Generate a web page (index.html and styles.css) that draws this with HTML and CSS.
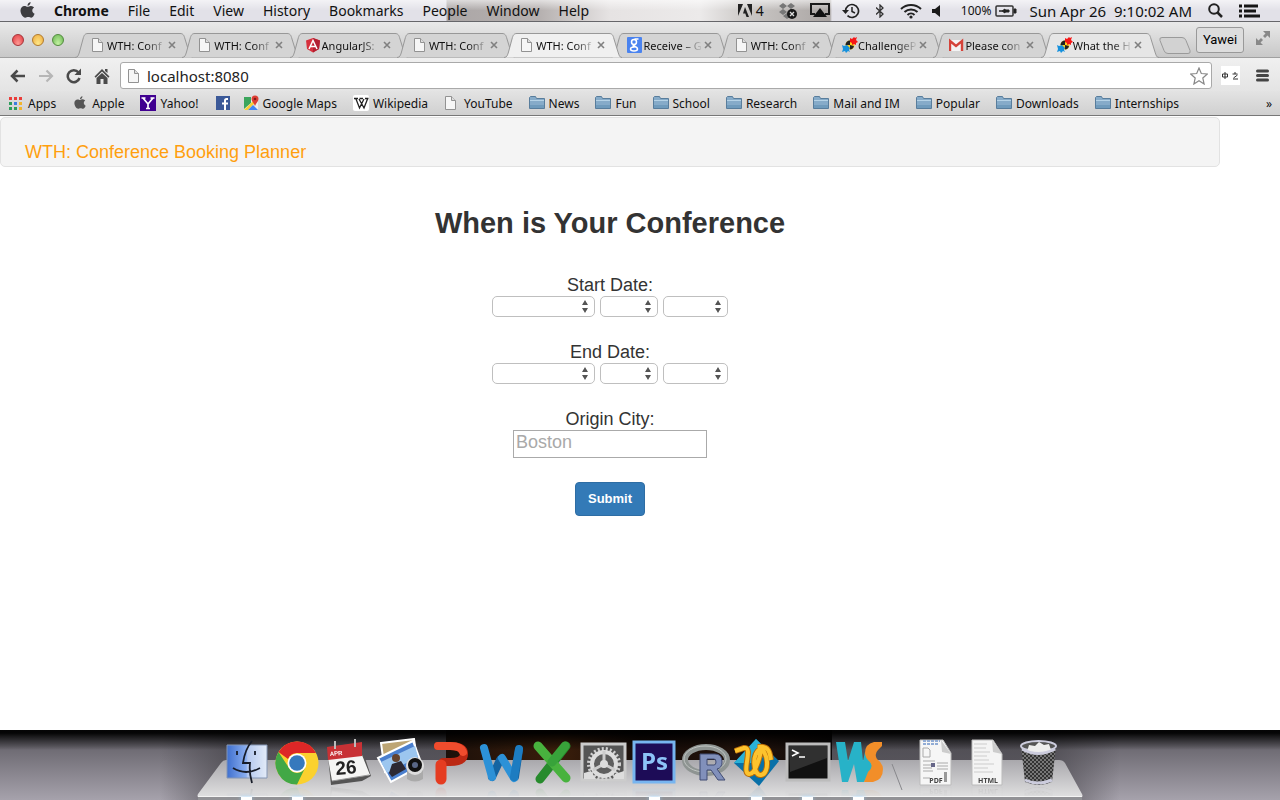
FILE: index.html
```html
<!DOCTYPE html>
<html lang="en">
<head>
    <meta charset="utf-8">
    <title>WTH: Conference Booking Planner</title>
    <link rel="stylesheet" href="styles.css">
</head>
<body>
    <!-- Shared icons -->
    <svg class="sprite" aria-hidden="true">
        <symbol id="doc" viewBox="0 0 16 16">
            <path d="M1.500 1.500h6l4 4v9h-10z" fill="#f6f6f6" stroke="#929292"/>
            <path d="M7.500 1.500v4h4" fill="#ddd" stroke="#929292"/>
        </symbol>
        <symbol id="folder" viewBox="0 0 16 16">
            <path d="M.5 13.500v-11l1-1h5l1 2h8v10z" fill="#86abc9" stroke="#587d9c"/>
            <path d="M1 5.500h14" stroke="#b5d2e6"/>
            <path d="M1 10h14v3H1z" fill="#709bbc"/>
        </symbol>
        <symbol id="apple" viewBox="0 0 16 18">
            <path d="M11.300 0c.2 2-1.400 3.900-3.300 4C7.800 2.100 9.500.300 11.300 0zM8.200 5c.8 0 1.900-1 3.600-.9 1.300.1 2.500.7 3.200 1.700-2.900 1.800-2.300 5.600.6 6.700-.7 1.900-2 4.200-3.600 4.200-1.200 0-1.700-.7-3.200-.7s-2 .7-3.200.7C3.300 16.700.5 12.900.5 9.100.5 6 2.600 4.200 4.700 4.200 6.200 4.200 7.300 5 8.200 5z"/>
        </symbol>
        <symbol id="close" viewBox="0 0 8 8">
            <path d="M1 1l6 6M7 1L1 7" stroke="#808080" stroke-width="1.600"/>
        </symbol>
        <symbol id="tab-shape" viewBox="0 0 118 25">
            <path d="M0 24.500C3 24.500 3.500 22 4.500 19L8 6C9 2 10 .5 13 .5h92c3 0 4 1.500 5 5.500l4 13c1 3 1.500 5.500 4 5.500"/>
        </symbol>
        <symbol id="puzzle" viewBox="0 0 16 16">
            <circle cx="8" cy="8" r="4.500" fill="#fdd01c"/>
            <path d="M8 8V3.500A4.500 4.500 0 0 0 3.500 8zM8 8v4.500A4.500 4.500 0 0 0 12 9z" fill="#222"/>
            <path d="M8 1l2 1 2-2 1 1 2-1-1 3 2 2-2 1v2l-2-1-2 1V6L8 5z" fill="#f51616"/>
            <path d="M0 8l2 1 3-1 3 3-1 2 1 2-2-1-2 2-1-2-3 1 1-3z" fill="#1691dd"/>
        </symbol>
    </svg>

    <header class="menubar">
        <nav class="menus">
            <svg class="apple-logo"><use href="#apple"/></svg>
            <strong>Chrome</strong>
            <span>File</span>
            <span>Edit</span>
            <span>View</span>
            <span>History</span>
            <span>Bookmarks</span>
            <span>People</span>
            <span>Window</span>
            <span>Help</span>
        </nav>
        <div class="status">
            <svg width="14" height="13" viewBox="0 0 14 13"><path d="M0 0h5L0 12zM9 0h5v12zM7 3l4 10H8.500L7.300 9.500H5z" fill="#222"/></svg>
            <span class="adobe-count">4</span>
            <svg class="dropbox" width="20" height="16" viewBox="0 0 20 16"><path d="M5 0l4 3-4 3-4-3zM13 0l4 3-4 3-4-3zM5 6l4 3-4 3-4-3zM13 6l4 3-4 3-4-3zM9 10l4 3-4 3-4-3z" fill="#777"/><circle cx="14" cy="11" r="5" fill="#181818"/><path d="M12 9l4 4M16 9l-4 4" stroke="#ddd" stroke-width="1.300"/></svg>
            <svg width="20" height="15" viewBox="0 0 20 15"><path d="M5 11H1V1h18v10h-4" fill="none" stroke="#1a1a1a" stroke-width="2"/><path d="M10 5l7 9H3z" fill="#111"/></svg>
            <svg width="18" height="16" viewBox="0 0 18 16"><path d="M3.500 8a6.500 6.500 0 1 1 2 4.700" fill="none" stroke="#222" stroke-width="1.700"/><path d="M0 7h7l-3.500 4z" fill="#222"/><path d="M10 4v4.500l3 1.500" fill="none" stroke="#222" stroke-width="1.500"/></svg>
            <svg class="bluetooth" width="8" height="14" viewBox="0 0 8 14"><path d="M0 3.500l7 6.500-3 3V1l3 3-7 6.500" fill="none" stroke="#333" stroke-width="1.300"/></svg>
            <svg width="22" height="16" viewBox="0 0 22 16"><g fill="none" stroke="#222" stroke-width="2"><path d="M1 6a14.500 14.500 0 0 1 20 0M4.500 9a9.500 9.500 0 0 1 13 0M7.500 12a5 5 0 0 1 7 0"/></g><circle cx="11" cy="14" r="1.600" fill="#222"/></svg>
            <svg class="volume" width="9" height="12" viewBox="0 0 9 12"><path d="M0 4h3l5-4v12L3 8H0z" fill="#1a1a1a"/></svg>
            <span class="percent">100%</span>
            <svg class="battery" width="22" height="12" viewBox="0 0 22 12"><rect x="1" y="1" width="17" height="10" rx="1" fill="none" stroke="#333" stroke-width="1.500"/><path d="M19 4h2v4h-2zM4 6h3l3-2v1h4v2h-4v1L7 6z" fill="#222" stroke="#222"/></svg>
            <time>Sun Apr 26&nbsp; 9:10:02 AM</time>
            <svg class="search" width="15" height="15" viewBox="0 0 15 15"><circle cx="6" cy="6" r="4.800" fill="none" stroke="#222" stroke-width="2"/><path d="M9.500 9.500L14 14" stroke="#222" stroke-width="2.500"/></svg>
            <svg width="21" height="14" viewBox="0 0 21 14"><path d="M0 2h3M0 7h3M0 12h3M5 2h14M5 7h12M5 12h16" stroke="#161616" stroke-width="2.800"/></svg>
        </div>
    </header>

    <div class="browser">
        <div class="tabstrip">
            <div class="lights"><i class="red"></i><i class="yellow"></i><i class="green"></i></div>
            <div class="tabs">
                <div class="tab"><svg class="shape"><use href="#tab-shape"/></svg><svg class="icon"><use href="#doc"/></svg><span>WTH: Conf</span><button aria-label="Close tab"><svg><use href="#close"/></svg></button></div>
                <div class="tab"><svg class="shape"><use href="#tab-shape"/></svg><svg class="icon"><use href="#doc"/></svg><span>WTH: Conf</span><button aria-label="Close tab"><svg><use href="#close"/></svg></button></div>
                <div class="tab"><svg class="shape"><use href="#tab-shape"/></svg><svg class="icon" viewBox="0 0 16 16"><path d="M7 1l7 2.500-1 8.500-6 3.500L1 12 0 3.500z" fill="#d7303d"/><path d="M7 1l7 2.500-1 8.500-6 3.500z" fill="#b31f31"/><path d="M3 12l4-8.500 4 8.500M4.500 9.500h5" fill="none" stroke="#fff" stroke-width="1.500"/></svg><span>AngularJS:</span><button aria-label="Close tab"><svg><use href="#close"/></svg></button></div>
                <div class="tab"><svg class="shape"><use href="#tab-shape"/></svg><svg class="icon"><use href="#doc"/></svg><span>WTH: Conf</span><button aria-label="Close tab"><svg><use href="#close"/></svg></button></div>
                <div class="tab active"><svg class="shape"><use href="#tab-shape"/></svg><svg class="icon"><use href="#doc"/></svg><span>WTH: Conf</span><button aria-label="Close tab"><svg><use href="#close"/></svg></button></div>
                <div class="tab"><svg class="shape"><use href="#tab-shape"/></svg><svg class="icon" viewBox="0 0 16 16"><rect width="15" height="16" rx="1" fill="#4a83ef"/><g fill="none" stroke="#fff" stroke-width="1.500"><circle cx="7" cy="5" r="2.500"/><path d="M11.500 2h-4M8.500 7.500c-3 1-3 1.500-1 2s3 1 3 2.500-1.500 2-3.500 2-3.500-.5-3.500-2 1.500-2 4-2"/></g></svg><span>Receive – G</span><button aria-label="Close tab"><svg><use href="#close"/></svg></button></div>
                <div class="tab"><svg class="shape"><use href="#tab-shape"/></svg><svg class="icon"><use href="#doc"/></svg><span>WTH: Conf</span><button aria-label="Close tab"><svg><use href="#close"/></svg></button></div>
                <div class="tab"><svg class="shape"><use href="#tab-shape"/></svg><svg class="icon"><use href="#puzzle"/></svg><span>ChallengeP</span><button aria-label="Close tab"><svg><use href="#close"/></svg></button></div>
                <div class="tab"><svg class="shape"><use href="#tab-shape"/></svg><svg class="icon" viewBox="0 0 16 16"><path d="M0 3h14v11H0z" fill="#f4f4f4"/><path d="M1 14V4l6 5 6-5v10" fill="none" stroke="#d5433a" stroke-width="2.400"/></svg><span>Please con</span><button aria-label="Close tab"><svg><use href="#close"/></svg></button></div>
                <div class="tab light"><svg class="shape"><use href="#tab-shape"/></svg><svg class="icon"><use href="#puzzle"/></svg><span>What the H</span><button aria-label="Close tab"><svg><use href="#close"/></svg></button></div>
            </div>
            <button class="new-tab" aria-label="New tab"><svg width="32" height="17" viewBox="0 0 32 17"><path d="M3 .5h20q3 0 4 3l4 10q1 3-2 3H9q-3 0-4-3l-4-10Q0 .5 3 .5z" fill="#d2d2d2" stroke="#9a9a9a"/></svg></button>
            <button class="profile">Yawei</button>
            <svg class="fullscreen" width="14" height="14" viewBox="0 0 14 14"><path d="M7 0h7v7l-2.500-2.500L9 7 7 5l2.500-2.500zM0 7l2.500 2.500L5 7l2 2-2.500 2.500L7 14H0z" fill="#888"/></svg>
        </div>

        <div class="toolbar">
            <button aria-label="Back"><svg width="16" height="14" viewBox="0 0 16 14"><path d="M15 7H2M7.500 1.500L2 7l5.500 5.500" fill="none" stroke="#4a4a4a" stroke-width="2.500"/></svg></button>
            <button aria-label="Forward"><svg width="16" height="14" viewBox="0 0 16 14"><path d="M1 7h13M8.500 1.500L14 7l-5.500 5.500" fill="none" stroke="#b6b6b6" stroke-width="2.200"/></svg></button>
            <button aria-label="Reload"><svg width="16" height="16" viewBox="0 0 16 16"><path d="M12.500 4.500A6 6 0 1 0 13.500 10" fill="none" stroke="#4a4a4a" stroke-width="2.500"/><path d="M15 .5V7H8.500z" fill="#4a4a4a"/></svg></button>
            <button aria-label="Home"><svg width="16" height="16" viewBox="0 0 16 16"><path d="M8 1l7.500 7.500-1.200 1.200L8 3.500 1.700 9.700.5 8.500zM11 1h2.500v4L11 3zM8 5l5.500 5v6h-4v-5h-3v5h-4v-6z" fill="#4a4a4a"/></svg></button>
            <div class="omnibox">
                <svg class="icon"><use href="#doc"/></svg>
                <input type="text" aria-label="Address" value="localhost:8080">
                <svg width="18" height="18" viewBox="0 0 18 18"><path d="M9 1l2.300 5.500 6 .5-4.500 4 1.300 6L9 13.800 3.900 17l1.300-6L.7 7l6-.5z" fill="#fff" stroke="#888" stroke-width="1.200"/></svg>
            </div>
            <svg class="extension" width="19" height="19" viewBox="0 0 19 19"><path d="M0 0h19v19H0z" fill="#fff"/><path d="M1.500 8h5v3h-5zM4 6v7M14 6v2M11.500 8h5M12.500 12l4-3M12 13h5" fill="none" stroke="#333"/></svg>
            <button class="menu-button" aria-label="Menu"><svg width="13" height="13" viewBox="0 0 13 13"><path d="M1.500 2h10M1.500 6.500h10M1.500 11h10" stroke="#444" stroke-width="3" stroke-linecap="round"/></svg></button>
        </div>

        <nav class="bookmarks">
            <a href="#"><svg class="icon" viewBox="0 0 16 16"><path d="M1 2h3v3H1zM6 2h3v3H6zM11 2h3v3h-3z" fill="#ea3d3a"/><path d="M1 7h3v3H1zM1 12h3v3H1zM6 12h3v3H6z" fill="#2d9c5a"/><path d="M6 7h3v3H6z" fill="#3c7de0"/><path d="M11 7h3v3h-3zM11 12h3v3h-3z" fill="#f2b52c"/></svg>Apps</a>
            <a href="#"><svg class="icon gray"><use href="#apple" x="2" y="1" width="12" height="14"/></svg>Apple</a>
            <a href="#"><svg class="icon" viewBox="0 0 16 16"><path d="M0 0h16v16H0z" fill="#400090"/><path d="M3 3l5 6v5M13 3L8 9M1.500 3h4M10.500 3h4M6 13.500h4" fill="none" stroke="#fff" stroke-width="1.700"/></svg>Yahoo!</a>
            <a href="#" aria-label="Facebook" class="facebook"><svg class="icon" viewBox="0 0 16 16"><path d="M1 1h14v14H1z" fill="#3b5998"/><path d="M13 4h-1.500Q10 4 10 5.500V15M7 8.500h6" fill="none" stroke="#fff" stroke-width="2"/></svg></a>
            <a href="#"><svg class="icon" viewBox="0 0 16 16"><path d="M1 2h14v13H1z" fill="#eee"/><path d="M1 2h7v6l-7 6z" fill="#3ba55c"/><path d="M1 15L10 6l2 2-7 7z" fill="#f9cf38"/><path d="M5 15l5-5 5 5z" fill="#4285f4"/><path d="M12 11C11 8 8.500 6.500 8.500 4a3.500 3.500 0 0 1 7 0c0 2.500-2.500 4-3.500 7z" fill="#dd3f34"/><circle cx="12" cy="4" r="1.300" fill="#801b19"/></svg>Google Maps</a>
            <a href="#"><svg class="icon" viewBox="0 0 16 16"><rect width="16" height="16" rx="2" fill="#fff"/><path d="M1 3.500h4M6.500 3.500h3.500M12 3.500h3.500M3 4l3.500 9L11 4M6 4l5 9 3.500-9" fill="none" stroke="#222" stroke-width="1.300"/></svg>Wikipedia</a>
            <a href="#"><svg class="icon"><use href="#doc"/></svg>YouTube</a>
            <a href="#"><svg class="icon"><use href="#folder"/></svg>News</a>
            <a href="#"><svg class="icon"><use href="#folder"/></svg>Fun</a>
            <a href="#"><svg class="icon"><use href="#folder"/></svg>School</a>
            <a href="#"><svg class="icon"><use href="#folder"/></svg>Research</a>
            <a href="#"><svg class="icon"><use href="#folder"/></svg>Mail and IM</a>
            <a href="#"><svg class="icon"><use href="#folder"/></svg>Popular</a>
            <a href="#"><svg class="icon"><use href="#folder"/></svg>Downloads</a>
            <a href="#"><svg class="icon"><use href="#folder"/></svg>Internships</a>
            <span class="more">»</span>
        </nav>

        <main class="page">
            <div class="navbar"><a href="#">WTH: Conference Booking Planner</a></div>
            <form class="planner">
                <h2>When is Your Conference</h2>
                <label for="start-month">Start Date:</label>
                <div class="date">
                    <select id="start-month" class="month"><option></option></select>
                    <select class="day" aria-label="Start day"><option></option></select>
                    <select class="year" aria-label="Start year"><option></option></select>
                </div>
                <label for="end-month">End Date:</label>
                <div class="date">
                    <select id="end-month" class="month"><option></option></select>
                    <select class="day" aria-label="End day"><option></option></select>
                    <select class="year" aria-label="End year"><option></option></select>
                </div>
                <label for="city">Origin City:</label>
                <input type="text" id="city" placeholder="Boston">
                <button type="button" class="btn">Submit</button>
            </form>
        </main>
    </div>

    <footer class="desktop">
        <svg class="shelf" viewBox="0 0 886 40" preserveAspectRatio="none">
            <defs>
                <linearGradient id="shelf-fill" x2="0" y2="1"><stop offset="0" stop-color="#a9a8ac"/><stop offset="1" stop-color="#e0e0e1"/></linearGradient>
            </defs>
            <path d="M29 0h833q4 0 6 3l17 31q1 2 0 3H1q-1-1 0-3L24 3q2-3 5-3z" fill="url(#shelf-fill)"/>
            <path d="M1 36h884v4H1z" fill="#929296"/>
            <path d="M1 36.500h884" stroke="#f4f4f4"/>
        </svg>
        <div class="dock">
            <!-- Finder -->
            <div class="app running"><svg viewBox="0 0 51 60">
                <defs><linearGradient id="finder" x2="1"><stop offset="0" stop-color="#3f70cf"/><stop offset=".48" stop-color="#8aaef0"/><stop offset=".52" stop-color="#b5c9ef"/><stop offset="1" stop-color="#e3ebf8"/></linearGradient></defs>
                <path d="M6 7h40v33H6z" fill="url(#finder)" stroke="#8496b5"/>
                <path d="M31 3C25 10 23 18 22 25h7c-1 8 0 13 2 20M12 30c8 5 18 5 27 0M16 13v4M34 13v4" fill="none" stroke="#171c28" stroke-width="1.800"/>
            </svg></div>
            <!-- Chrome -->
            <div class="app running"><svg viewBox="0 0 51 60">
                <circle cx="25" cy="25" r="21.500" fill="#fbd12e"/>
                <path d="M6.500 14A21.500 21.500 0 0 1 44 15H25a10 10 0 0 0-9 6z" fill="#dd2727"/>
                <path d="M6.500 14A21.500 21.500 0 0 0 25 46.500L33 30a9 9 0 0 1-16 0z" fill="#42a846"/>
                <circle cx="25" cy="25" r="9.500" fill="#fff"/><circle cx="25" cy="25" r="7.800" fill="#3679bd"/>
            </svg></div>
            <!-- Calendar -->
            <div class="app"><svg viewBox="0 0 51 60">
                <path d="M4 9l33-4 11 33-9 5-31 4z" fill="#555"/>
                <path d="M5 20l34-3 8 20-38 6z" fill="#f5f5f4"/>
                <path d="M4 9l35-5v14L5 22z" fill="#c83135"/>
                <path d="M12 3v8M32 1v8" stroke="#bbb" stroke-width="2"/>
                <text x="7" y="18" class="cal-month" transform="rotate(-5 7 18)">APR</text>
                <text x="13" y="37" class="cal-day" transform="rotate(-5 13 37)">26</text>
                <path d="M9 43l37-6" stroke="#999"/>
            </svg></div>
            <!-- Preview -->
            <div class="app"><svg viewBox="0 0 51 60">
                <path d="M7 5l33-4 4 28-33 5z" fill="#bda574" stroke="#fff" stroke-width="2"/>
                <path d="M4 20L39 3l9 24-31 17z" fill="#4b7fce" stroke="#fff" stroke-width="2"/>
                <path d="M7 24l34-16 3 11-31 16z" fill="#9cc6ef"/>
                <circle cx="22" cy="20" r="4" fill="#65432f"/><path d="M15 35l3-9 9-3 5 8-14 8z" fill="#2c2833"/>
                <path d="M33 32h16v9q-8 5-16 0z" fill="#aaa"/><circle cx="41" cy="28" r="9" fill="#ddd"/><circle cx="41" cy="27" r="7" fill="#111"/><circle cx="41" cy="27" r="3" fill="#596786"/>
            </svg></div>
            <!-- PowerPoint -->
            <div class="app"><svg viewBox="0 0 51 60">
                <path d="M13 8h12q14 0 14 8t-14 8h-7" fill="none" stroke="#bb2814" stroke-width="8" stroke-linecap="round"/>
                <path d="M13 8h12q11 0 13 6" fill="none" stroke="#ef4c2d" stroke-width="8" stroke-linecap="round"/>
                <path d="M16 27v14" stroke="#e53c21" stroke-width="11" stroke-linecap="round"/>
            </svg></div>
            <!-- Word -->
            <div class="app"><svg viewBox="0 0 51 60" fill="none" stroke-linecap="round" stroke-width="8">
                <path d="M24 22L16 39M43 12l-4 27" stroke="#1464a2"/>
                <path d="M8 10l8 29M26 20l12 20" stroke="#2c91d7"/><path d="M43 11l-5 28" stroke="#1d7cc1"/>
            </svg></div>
            <!-- Excel -->
            <div class="app"><svg viewBox="0 0 51 60" fill="none" stroke-linecap="round" stroke-width="9">
                <path d="M39 8L13 41" stroke="#278b2d"/><path d="M11 8l28 32" stroke="#48b23e"/>
                <path d="M38 8L25 24" stroke="#38a33a"/>
            </svg></div>
            <!-- System Preferences -->
            <div class="app"><svg viewBox="0 0 51 60">
                <path d="M4 6h43v36H4z" fill="#555" stroke="#ccc" stroke-width="3"/>
                <circle cx="26" cy="26" r="15" fill="none" stroke="#d0d0d0" stroke-width="4" stroke-dasharray="2 2"/>
                <circle cx="26" cy="26" r="12" fill="#5e5e5e" stroke="#ddd" stroke-width="4"/>
                <path d="M26 26V13M26 26l-11 6M26 26l11 6" stroke="#ccc" stroke-width="3"/><circle cx="26" cy="26" r="4" fill="#ddd"/>
                <path d="M6 35l7-2 5 8H6zM46 33l-9 3-2 5h11z" fill="#ddd"/>
            </svg></div>
            <!-- Photoshop -->
            <div class="app running"><svg viewBox="0 0 51 60">
                <path d="M5 4h40v40H5z" fill="#1d0c57" stroke="#77b5f0" stroke-width="3"/>
                <text x="12" y="32" class="ps">Ps</text>
            </svg></div>
            <!-- R -->
            <div class="app"><svg viewBox="0 0 51 60">
                <ellipse cx="26" cy="22" rx="21" ry="13" fill="none" stroke="#8e9492" stroke-width="6"/>
                <ellipse cx="25" cy="21" rx="21" ry="13" fill="none" stroke="#c0c5c2" stroke-width="1"/>
                <path d="M20 42V16h15q7 0 7 8 0 6-5 7l8 11h-7l-7-10h-4v10zM27 21v6h7q2 0 2-3t-2-3z" fill="#8190bb" stroke="#414c74"/>
            </svg></div>
            <!-- TextWrangler -->
            <div class="app running"><svg viewBox="0 0 51 60">
                <path d="M25 1l23 22-20 25L3 25z" fill="#0870a8"/><path d="M25 1l13 13-13 11L3 25z" fill="#29b1d7"/>
                <path d="M4 13l9-3c10-2-3 25 5 26 7 1 12-22 12-25-10 3-8 27 0 26 9-1 8-25-3-28 12-2 12 8 13 13" fill="none" stroke="#b86c08" stroke-width="6"/>
                <path d="M4 13l9-3c10-2-3 25 5 26 7 1 12-22 12-25-10 3-8 27 0 26 9-1 8-25-3-28 12-2 12 8 13 13" fill="none" stroke="#fdc32d" stroke-width="4"/>
            </svg></div>
            <!-- Terminal -->
            <div class="app running"><svg viewBox="0 0 51 60">
                <path d="M5 6h42v36H5z" fill="#111" stroke="#bcbcbc" stroke-width="3"/><path d="M7 8h38v12L8 34z" fill="#303030"/>
                <path d="M10 12l6 3-6 3M17 19h6" fill="none" stroke="#fff" stroke-width="1.600"/>
            </svg></div>
            <!-- WebStorm -->
            <div class="app running"><svg viewBox="0 0 51 60">
                <path d="M3 4h9l3 19 6-19h7l2 19 2-9 8 15-9 15h-7l-3-18-6 18H9z" fill="#27b2c8"/>
                <path d="M49 4h-8q-9 2-9 11 0 5 5 9 4 5-2 10l-4 10h9q10-2 10-13 0-5-6-10-3-5 1-9l4-4z" fill="#f28e29"/>
            </svg></div>
            <svg class="separator" viewBox="0 0 27 60"><path d="M8 26l10 26" stroke="#88888c"/></svg>
            <!-- Stacks -->
            <div class="app"><svg viewBox="0 0 51 60">
                <path d="M9 2h23l8 13v32H9z" fill="#f6f6f6" stroke="#bbb"/><path d="M30 2l10 14-9-2z" fill="#ccc"/>
                <path d="M12 3h17M12 6h15" stroke="#91acd5" stroke-width="2" stroke-dasharray="3 1"/>
                <path d="M12 10h5l2 2v7h-7zM12 23h12M12 27h10M12 30h9M12 33h10M26 25h11M26 28h11M26 31h11M12 40h7" fill="none" stroke="#aaa"/><path d="M20 25h4v4h-4z" fill="#668"/>
                <text x="25" y="45" class="file-type">PDF</text><path d="M33 34h3v10h-3z" fill="#999"/>
            </svg></div>
            <div class="app"><svg viewBox="0 0 51 60">
                <path d="M10 2h21l9 14v31H10z" fill="#f4f4f4" stroke="#bbb"/><path d="M30 2l10 14-9-2z" fill="#ccc"/>
                <path d="M12 6h13M12 10h12M12 14h16M12 18h13M12 22h15M12 26h20M12 30h14M12 34h19" stroke="#ccc"/>
                <text x="26" y="45" class="file-type">HTML</text>
            </svg></div>
            <!-- Trash -->
            <div class="app"><svg viewBox="0 0 51 60">
                <defs><pattern id="mesh" width="4" height="4" patternUnits="userSpaceOnUse"><path d="M0 0h4v4H0z" fill="#777"/><path d="M0 0l4 4M4 0L0 4" stroke="#333"/></pattern></defs>
                <path d="M8 8h35l-4 36q-13 6-27 0z" fill="url(#mesh)"/>
                <ellipse cx="25.500" cy="8" rx="17.500" ry="5" fill="#555" stroke="#ccd" stroke-width="2"/>
                <path d="M14 14l2-7 6 1 4-4 5 3 5-1 2 6-9 4z" fill="#eee"/>
                <path d="M9 11q16 9 33 0M12 42q13 6 27 0" fill="none" stroke="#ccd" stroke-width="3"/>
            </svg></div>
        </div>
    </footer>
</body>
</html>
```
FILE: styles.css
```css
* {
    box-sizing: border-box;
}

body {
    margin: 0;
    min-height: 100vh;
    display: flex;
    flex-direction: column;
    font-family: "Noto Sans", sans-serif;
    color: #111;
}

button {
    display: flex;
    padding: 0;
    border: 0;
    background: none;
    font: inherit;
}

svg {
    display: block;
    flex: none;
}

.sprite {
    position: absolute;
    width: 0;
    height: 0;
}

.icon {
    width: 16px;
    height: 16px;
}

/* Menu bar */
.menubar {
    display: flex;
    justify-content: space-between;
    height: 22px;
    padding: 0 20px;
    font-size: 14px;
    line-height: 22px;
    white-space: nowrap;
    border-bottom: 1px solid #66666a;
    background:
        linear-gradient(rgba(255, 255, 255, 0.6), rgba(255, 255, 255, 0) 50%),
        linear-gradient(90deg, #e2e1e8 446px, #aba6a6 447px, #b6b1b0 540px, #e6e3e3 610px, #eceaea 700px, #c9c6c4 750px, #aaa5a3 830px, #e2e1e8 832px);
}

.menus,
.status {
    display: flex;
    align-items: center;
    gap: 19px;
}

.apple-logo {
    width: 15px;
    height: 17px;
    fill: #3d3d40;
}

.status {
    gap: 12px;
}

.adobe-count {
    margin: 0 2px 0 -8px;
}

.bluetooth {
    margin: 0 4px;
}

.volume {
    margin: 0 8px 0 -2px;
}

.percent {
    font-size: 12px;
}

.battery {
    margin-left: -8px;
}

.status time {
    font-size: 15px;
}

.search {
    margin: 0 4px;
}

/* Browser window */
.browser {
    flex: 1;
    display: flex;
    flex-direction: column;
    background: #fff;
}

.tabstrip {
    display: flex;
    align-items: center;
    height: 36px;
    padding: 0 10px 0 12px;
    border-bottom: 1px solid #a0a0a0;
    background: linear-gradient(#e9e9e9, #c8c8c8);
}

.lights {
    display: flex;
    gap: 8px;
    width: 63px;
}

.lights i {
    width: 12px;
    height: 12px;
    border: 1px solid;
    border-radius: 50%;
}

.lights .red {
    border-color: #a5343a;
    background: radial-gradient(at 50% 90%, #ff9c96, #e2383f);
}

.lights .yellow {
    border-color: #b17a2c;
    background: radial-gradient(at 50% 90%, #ffe989, #eeaa3c);
}

.lights .green {
    border-color: #528b3e;
    background: radial-gradient(at 50% 90%, #c5f3a3, #69b652);
}

.tabs {
    flex: 1;
    display: flex;
    align-self: flex-end;
}

.tab {
    position: relative;
    flex: 1;
    display: flex;
    align-items: center;
    height: 24px;
    padding-left: 16px;
    font-size: 11px;
}

.tab .shape {
    position: absolute;
    left: 0;
    top: 0;
    width: 118px;
    height: 25px;
    fill: #d4d4d4;
    stroke: #989898;
}

.tab .icon,
.tab span,
.tab button {
    position: relative;
}

.tab span {
    width: 60px;
    white-space: nowrap;
    -webkit-mask-image: linear-gradient(90deg, #000 65%, transparent);
    mask-image: linear-gradient(90deg, #000 65%, transparent);
}

.tab button {
    margin-left: 1px;
}

.tab button svg {
    width: 8px;
    height: 8px;
}

.tab.light .shape {
    fill: #e6e6e6;
}

.tab.active {
    z-index: 1;
}

.tab.active .shape {
    fill: #f0f0f0;
}

.new-tab {
    margin: 12px 5px 0 11px;
}

.profile {
    width: 48px;
    height: 26px;
    justify-content: center;
    align-items: center;
    border: 1px solid #999;
    border-radius: 3px;
    background: #ddd;
    font-family: Roboto, sans-serif;
    font-size: 13px;
}

.fullscreen {
    margin: 0 0 4px 12px;
}

.toolbar {
    display: flex;
    align-items: center;
    gap: 12px;
    height: 33px;
    padding: 2px 10px 0;
    background: linear-gradient(#f0f0f0, #e4e4e4);
}

.omnibox {
    flex: 1;
    display: flex;
    align-items: center;
    gap: 4px;
    height: 27px;
    margin: 0 -3px 0 -2px;
    padding: 0 3px 0 6px;
    border: 1px solid #a9a9a9;
    border-radius: 3px;
    background: #fff;
}

.omnibox input {
    flex: 1;
    padding: 0;
    border: 0;
    outline: 0;
    font: 15px "Noto Sans", sans-serif;
    color: #222;
}

.menu-button {
    margin: 0 1px 0 4px;
}

.bookmarks {
    display: flex;
    align-items: center;
    gap: 16px;
    height: 25px;
    padding: 0 8px;
    font-size: 12px;
    white-space: nowrap;
    border-bottom: 1px solid #777;
    background: linear-gradient(#e3e3e3, #d0d0d0);
}

.bookmarks a {
    display: flex;
    align-items: center;
    gap: 4px;
    color: #111;
    text-decoration: none;
}

.bookmarks .facebook {
    margin-right: -4px;
}

.bookmarks .gray {
    fill: #555;
}

.bookmarks .more {
    margin-left: auto;
}

/* Conference planner */
.page {
    flex: 1;
    padding: 1px 60px 0 0;
    font-family: "Helvetica Neue", "Liberation Sans", sans-serif;
    font-size: 18px;
    color: #333;
}

.navbar {
    padding: 24px 24px 4px;
    border: 1px solid #e2e2e2;
    border-radius: 5px;
    background: #f4f4f4;
    line-height: 20px;
}

.navbar a {
    color: #ff9f0f;
    text-decoration: none;
}

.planner {
    display: flex;
    flex-direction: column;
    align-items: center;
    padding-top: 39px;
}

.planner h2 {
    margin: 0 0 34px;
    font-size: 29px;
    line-height: 34px;
}

.planner label {
    line-height: 22px;
}

.date {
    display: flex;
    gap: 5px;
    margin-bottom: 24px;
}

.date select {
    height: 21px;
    border: 1px solid #bfbfbf;
    border-radius: 5px;
    appearance: none;
    background: #fff url("data:image/svg+xml,%3Csvg xmlns='http://www.w3.org/2000/svg' width='6' height='13'%3E%3Cpath d='M0 5l3-5 3 5zM0 8h6l-3 5z' fill='%23555'/%3E%3C/svg%3E") no-repeat right 6px center;
}

.month {
    width: 103px;
}

.day {
    width: 58px;
}

.year {
    width: 65px;
}

#city {
    width: 194px;
    height: 28px;
    margin-bottom: 24px;
    padding: 0 2px 3px;
    border: 1px solid #aaa;
    font: 18px "Liberation Sans", sans-serif;
}

#city::placeholder {
    color: #a9a9a9;
}

.btn {
    padding: 8px 12px;
    border: 1px solid #2e6da4;
    border-radius: 4px;
    background: #337ab7;
    color: #fff;
    font: bold 13px/16px "Liberation Sans", sans-serif;
}

/* Dock */
.desktop {
    position: relative;
    display: flex;
    justify-content: center;
    height: 70px;
    background:
        linear-gradient(rgba(0, 0, 0, 0.95) 3px, rgba(0, 0, 0, 0) 20px),
        linear-gradient(90deg, transparent 446px, #1c100a 446px, #3a1e0b 560px, #160c08 640px, #23130c 750px, #0c0a0a 832px, transparent 832px),
        linear-gradient(90deg, transparent 160px, rgba(70, 68, 74, 0.7) 230px, rgba(70, 68, 74, 0.7) 1050px, transparent 1120px),
        linear-gradient(#6b6870 16px, #a6a2ac);
}

.shelf {
    position: absolute;
    left: 50%;
    bottom: 0;
    width: 886px;
    height: 40px;
    margin-left: -443px;
}

.dock {
    position: relative;
    display: flex;
    padding: 8px 0 0 4px;
}

.app {
    position: relative;
    width: 51px;
}

.app svg {
    width: 51px;
    height: 60px;
    -webkit-box-reflect: below -24px linear-gradient(transparent 60%, rgba(0, 0, 0, 0.2));
}

.running::after {
    content: "";
    position: absolute;
    left: 20px;
    bottom: 0;
    width: 11px;
    height: 3px;
    background: #fff;
    box-shadow: 0 0 4px #9fd4ff;
}

.separator {
    width: 27px;
    height: 60px;
}

.cal-month {
    font: bold 6px "Liberation Sans", sans-serif;
    fill: #fff;
}

.cal-day {
    font: bold 19px "Liberation Sans", sans-serif;
    fill: #222;
}

.ps {
    font: bold 24px "Open Sans", sans-serif;
    fill: #8cc3f7;
}

.file-type {
    font: bold 7px "Noto Sans", sans-serif;
    fill: #444;
    text-anchor: middle;
}
```
